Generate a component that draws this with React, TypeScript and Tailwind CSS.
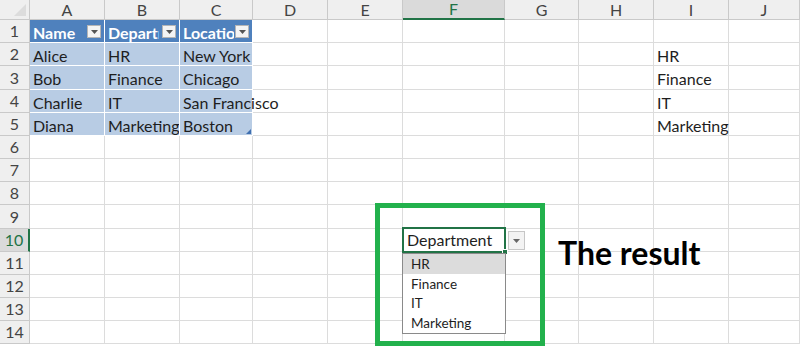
import React from "react";

const cols = ["A", "B", "C", "D", "E", "F", "G", "H", "I", "J"];
const rowHeights = [23, 23, 24, 23, 23, 23, 23, 23, 24, 23, 23, 23, 23, 23];

const table: Record<string, string> = {
  "1A": "Name", "1B": "Department", "1C": "Location",
  "2A": "Alice", "2B": "HR", "2C": "New York",
  "3A": "Bob", "3B": "Finance", "3C": "Chicago",
  "4A": "Charlie", "4B": "IT", "4C": "San Francisco",
  "5A": "Diana", "5B": "Marketing", "5C": "Boston",
  "2I": "HR", "3I": "Finance", "4I": "IT", "5I": "Marketing",
};

const FilterButton = () => (
  <span className="absolute right-[3px] top-[5px] w-[14px] h-[13px] bg-[#f4f4f4] border border-[#b5b5b5] flex items-center justify-center">
    <svg width="7" height="4" viewBox="0 0 7 4"><path d="M0 0h7L3.5 4z" fill="#555" /></svg>
  </span>
);

function Cell({ row, col }: { row: number; col: string }) {
  const key = `${row}${col}`;
  const text = table[key];
  const inTable = row <= 5 && ["A", "B", "C"].includes(col);
  if (inTable && row === 1) {
    return (
      <div className="relative bg-[#4f81bd] border-r border-b border-white flex">
        <span className="w-[54px] pl-[3px] pt-[1px] text-white font-bold text-[16px] whitespace-nowrap overflow-hidden">{text}</span>
        <FilterButton />
      </div>
    );
  }
  if (inTable) {
    return (
      <div className={`relative bg-[#b8cce4] border-r border-b border-white ${col === "C" ? "overflow-visible z-10" : "overflow-hidden"}`}>
        <span className="block pl-[3px] pt-[1px] text-[16px] text-[#1e1e1e] whitespace-nowrap">{text}</span>
        {key === "5C" && (
          <svg className="absolute right-[1px] bottom-[1px]" width="5" height="5" viewBox="0 0 5 5"><path d="M5 0v5H0z" fill="#3f6fb0" /></svg>
        )}
      </div>
    );
  }
  return (
    <div className="border-r border-b border-[#dcdcdc]">
      {text && <span className="block pl-[3px] pt-[1px] text-[16px] text-[#1e1e1e] whitespace-nowrap">{text}</span>}
    </div>
  );
}

export default function App() {
  return (
    <div className="relative w-[800px] h-[346px] overflow-hidden bg-white font-['Lato','Liberation_Sans',sans-serif]">
      <div
        className="grid grid-cols-[30px_75px_75px_73px_75px_75px_102px_74px_75px_75px_1fr]"
        style={{ gridTemplateRows: `20px ${rowHeights.map((h) => h + "px").join(" ")}` }}
      >
        <div className="relative bg-[#efefef] border-r border-b border-[#c9c9c9]">
          <svg className="absolute right-[3px] bottom-[3px]" width="12" height="12" viewBox="0 0 12 12"><path d="M12 0v12H0z" fill="#dcdcdc" /></svg>
        </div>
        {cols.map((c) => (
          <div
            key={c}
            className={
              c === "F"
                ? "bg-[#dadada] border-r border-[#c9c9c9] border-b-2 border-b-[#217346] text-[#217346] text-[16px] flex items-center justify-center leading-none"
                : "bg-[#efefef] border-r border-b border-[#c9c9c9] text-[#444] text-[16px] flex items-center justify-center leading-none"
            }
          >
            {c}
          </div>
        ))}
        {rowHeights.map((_, i) => {
          const row = i + 1;
          return (
            <React.Fragment key={row}>
              <div
                className={
                  row === 10
                    ? "bg-[#dadada] border-b border-[#c9c9c9] border-r-2 border-r-[#217346] text-[#217346] text-[16px] flex items-center justify-center"
                    : "bg-[#efefef] border-r border-b border-[#c9c9c9] text-[#444] text-[16px] flex items-center justify-center"
                }
              >
                {row}
              </div>
              {cols.map((c) => (
                <Cell key={c} row={row} col={c} />
              ))}
            </React.Fragment>
          );
        })}
      </div>

      {/* green highlight box */}
      <div className="absolute left-[375px] top-[203px] w-[170px] h-[143px] border-[5px] border-[#22b14c]" />

      {/* selected cell with data validation dropdown */}
      <div className="absolute left-[402px] top-[227px] w-[104px] h-[26px] border-2 border-[#217346] bg-white">
        <span className="block pl-[3px] pt-[1px] text-[16px] text-[#1e1e1e] leading-[20px]">Department</span>
        <span className="absolute right-[-4px] bottom-[-4px] w-[6px] h-[6px] bg-[#217346] border border-white" />
      </div>
      <div className="absolute left-[508px] top-[231px] w-[17px] h-[19px] bg-[#f3f3f3] border border-[#c6c6c6] flex items-center justify-center">
        <svg width="7" height="4" viewBox="0 0 7 4"><path d="M0 0h7L3.5 4z" fill="#666" /></svg>
      </div>
      <div className="absolute left-[402px] top-[253px] w-[104px] h-[81px] flex flex-col bg-white border border-[#8a8a8a] text-[13.5px] text-[#1e1e1e]">
        <div className="h-[20px] bg-[#dcdcdc] pl-[8px] leading-[20px]">HR</div>
        <div className="h-[20px] pl-[8px] leading-[20px]">Finance</div>
        <div className="h-[19px] pl-[8px] leading-[19px]">IT</div>
        <div className="h-[20px] pl-[8px] leading-[20px]">Marketing</div>
      </div>

      <div className="absolute left-[558px] top-[237px] text-[32px] font-bold text-black leading-none">The result</div>
    </div>
  );
}
